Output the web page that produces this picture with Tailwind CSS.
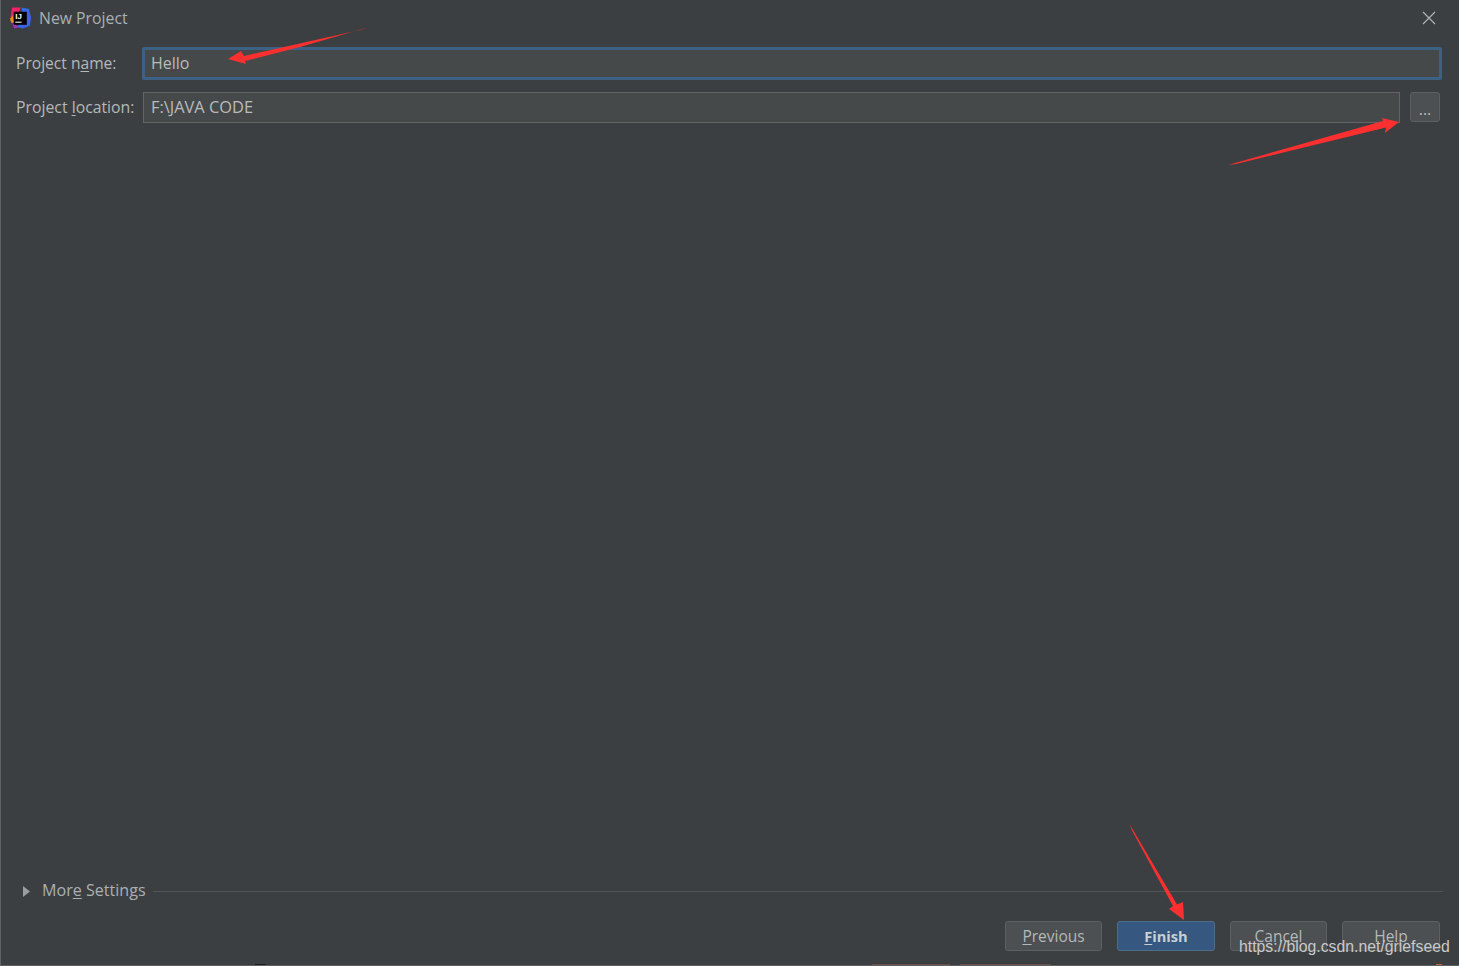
<!DOCTYPE html>
<html lang="en">
<head>
  <meta charset="UTF-8">
  <title>New Project</title>
  <script src="https://cdn.jsdelivr.net/npm/@tailwindcss/browser@4"></script>
</head>
<body class="bg-[#3c3f41] overflow-hidden">
  <div class="relative w-[1459px] h-[966px] flex flex-col border-l border-b border-[#5f6264] font-['Open_Sans','Noto_Sans',sans-serif] text-[15.8px] text-[#b4b8ba]">

    <!-- title bar -->
    <div class="h-[36px] flex items-center pl-[8px] pr-[23px]">
      <svg width="22" height="22" viewBox="0 0 21 21" class="shrink-0">
        <path d="M3 0.5 L11 0.5 L9 8 L1.5 10 Z" fill="#f0246a"/>
        <path d="M1 11 L4 8 L5 15 L2 15 Z" fill="#f58a1f"/>
        <path d="M3 15 L10 19 L5 20.500 Z" fill="#a832c4"/>
        <path d="M12 0.500 L19 2 L21 10 L20 18 L13 20.500 L8 19 L12 10 Z" fill="#3b64e8"/>
        <rect x="4.500" y="4.500" width="12.500" height="12.500" fill="#000"/>
        <text x="6" y="11.500" font-size="7.5" font-weight="700" fill="#fff" font-family="Liberation Sans">IJ</text>
        <rect x="6" y="14" width="6" height="1" fill="#fff"/>
      </svg>
      <span class="ml-[8px] mt-[1px] text-[#a9b0b4]">New Project</span>
      <svg width="14" height="14" viewBox="0 0 14 14" class="ml-auto" stroke="#b0b3b5" stroke-width="1.2">
        <path d="M1 1 L13 13 M13 1 L1 13"/>
      </svg>
    </div>

    <!-- form -->
    <div class="pl-[15px] pr-[17px] pt-[11px]">
      <div class="flex items-center h-[33px]">
        <label class="w-[126px] shrink-0 text-[15.6px]">Project n<span class="underline underline-offset-2">a</span>me:</label>
        <div class="flex-1 h-full flex items-center px-[6px] bg-[#45494a] border-[3px] border-[#3d6185] rounded-[2px] text-[#bbbbbb] text-[16px] -mt-[1px]">Hello</div>
      </div>
      <div class="flex items-center h-[31px] mt-[12px]">
        <label class="w-[127px] shrink-0">Project <span class="underline underline-offset-2">l</span>ocation:</label>
        <div class="flex-1 h-full flex items-center px-[7px] bg-[#45494a] border border-[#646464] text-[#bbbbbb] text-[16.4px]">F:\JAVA CODE</div>
        <button class="w-[30px] h-[30px] ml-[10px] mr-[2px] self-start bg-[#4c5052] border border-[#5e6060] rounded-[3px] text-[#bbbbbb] leading-none pt-[5px]">...</button>
      </div>
    </div>

    <div class="flex-1"></div>

    <!-- more settings -->
    <div class="flex items-center h-[20px] pl-[22px] pr-[16px]">
      <svg width="8" height="11" viewBox="0 0 8 11"><path d="M0 0 L7 5.5 L0 11 Z" fill="#9a9ea0"/></svg>
      <span class="ml-[11px] -mt-[2px] text-[16.1px] text-[#a9b0b4]">Mor<span class="underline underline-offset-2">e</span> Settings</span>
      <div class="flex-1 h-px bg-[#515456] ml-[7px]"></div>
    </div>

    <!-- buttons -->
    <div class="flex justify-end gap-[15px] pr-[19px] pt-[20px] pb-[14px] text-[15.5px]">
      <button class="w-[97px] h-[30px] pt-[2px] bg-[#4c5052] border border-[#5e6060] rounded-[3px] text-[#b4b8ba]"><span class="underline underline-offset-2">P</span>revious</button>
      <button class="w-[98px] h-[30px] pt-[2px] bg-[#365880] border border-[#4c708c] rounded-[3px] font-bold text-[14.6px] text-[#c8ced2]"><span class="underline underline-offset-2">F</span>inish</button>
      <button class="w-[97px] h-[30px] pt-[2px] bg-[#4c5052] border border-[#5e6060] rounded-[3px] text-[#b4b8ba]">Cancel</button>
      <button class="w-[98px] h-[30px] pt-[2px] bg-[#4c5052] border border-[#5e6060] rounded-[3px] text-[#b4b8ba]">Help</button>
    </div>

    <!-- scraps of the window behind, showing along the bottom edge -->
    <span class="absolute left-[254px] top-[964px] w-[11px] h-px bg-[#1e1e1e]"></span>
    <span class="absolute left-[871px] top-[964px] w-[78px] h-px bg-[#6b4f46]"></span>
    <span class="absolute left-[959px] top-[964px] w-[91px] h-px bg-[#6b4f46]"></span>
    <span class="absolute left-[1435px] top-[964px] w-[6px] h-px bg-[#c9602f]"></span>

    <!-- red annotation arrows drawn on top of the screenshot -->
    <svg class="absolute left-[-1px] top-0 pointer-events-none" width="1459" height="966" fill="#fa3030">
      <polygon points="369,27 360,30 244,56 241,51 228,59 246,64 245,61 300,47"/>
      <polygon points="1228,165 1236,164 1386,127.500 1385,133 1399,122 1382,118 1383,121"/>
      <polygon points="1129.500,824 1132,830.500 1173,906 1169,909 1184,920 1183,902 1177,904.500"/>
    </svg>

    <!-- watermark -->
    <span class="absolute left-[1238px] top-[935px] font-['Liberation_Sans',sans-serif] text-[15.8px] text-[#c9c9c9]">https://blog.csdn.net/griefseed</span>
  </div>
</body>
</html>
